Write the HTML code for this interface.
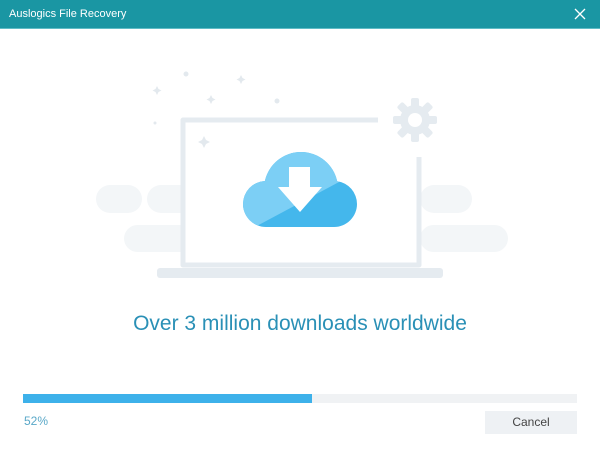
<!DOCTYPE html>
<html><head><style>
body{margin:0;width:600px;height:453px;background:#fff;position:relative;overflow:hidden;font-family:"Liberation Sans",sans-serif}
.t{position:absolute;left:0;top:0;width:600px;height:28px;background:#1a96a3;border-bottom:1px solid #5fbcc6}
.t span{position:absolute;left:9px;top:8px;color:#fff;font-size:11px}
.p{position:absolute;background:#f3f6f8;border-radius:14px}
</style></head><body>
<div class="t"><span>Auslogics File Recovery</span>
<svg style="position:absolute;left:574px;top:8px" width="12" height="12"><path d="M1 1L11 11M11 1L1 11" stroke="#fff" stroke-width="1.3"/></svg></div>
<div class="p" style="left:96px;top:185px;width:46px;height:28px"></div>
<div class="p" style="left:147px;top:185px;width:60px;height:28px"></div>
<div class="p" style="left:420px;top:185px;width:52px;height:28px"></div>
<div class="p" style="left:124px;top:225px;width:80px;height:27px"></div>
<div class="p" style="left:420px;top:225px;width:88px;height:27px"></div>
<svg style="position:absolute;left:0;top:0" width="600" height="300">
<rect x="183" y="120" width="238" height="145" fill="#fff"/>
<path d="M378 120H183V265H419V157" fill="none" stroke="#e5ebf0" stroke-width="5" stroke-linejoin="round"/>
<rect x="157" y="268" width="286" height="10" rx="3" fill="#e5ebf0"/>
<g fill="#e5ebf0" transform="translate(415 120)">
<circle r="15"/>
<g><rect x="-4" y="-22" width="8" height="44" rx="2"/><rect x="-4" y="-22" width="8" height="44" rx="2" transform="rotate(45)"/><rect x="-4" y="-22" width="8" height="44" rx="2" transform="rotate(90)"/><rect x="-4" y="-22" width="8" height="44" rx="2" transform="rotate(135)"/></g>
<circle r="7" fill="#fff"/></g>
<g fill="#e3e9ee">
<circle cx="186" cy="74" r="2.5"/><circle cx="277" cy="101" r="2.5"/><circle cx="155" cy="123" r="1.5"/>
<path d="M157 86l1.5 3 3 1.5-3 1.5-1.5 3-1.5-3-3-1.5 3-1.5z"/>
<path d="M211 95l1.5 3 3 1.5-3 1.5-1.5 3-1.5-3-3-1.5 3-1.5z"/>
<path d="M241 75l1.5 3 3 1.5-3 1.5-1.5 3-1.5-3-3-1.5 3-1.5z"/>
<path d="M204 136l2 4 4 2-4 2-2 4-2-4-4-2 4-2z"/></g>
<defs><clipPath id="c">
<circle cx="266" cy="204" r="23"/><circle cx="301" cy="189" r="37"/><circle cx="334" cy="204" r="23"/><rect x="266" y="190" width="68" height="37"/>
</clipPath></defs>
<g clip-path="url(#c)"><rect x="230" y="140" width="150" height="100" fill="#44b7ec"/><path d="M230 140H380V160L240 235H230z" fill="#7ccff5"/></g>
<path d="M289 167h21v20h12l-22 25-22-25h11z" fill="#fff"/>
</svg>
<div style="position:absolute;left:0;width:600px;top:312px;text-align:center;font-size:21px;color:#2a90b6">Over 3 million downloads worldwide</div>
<div style="position:absolute;left:23px;top:394px;width:554px;height:9px;background:#f0f2f4"></div>
<div style="position:absolute;left:23px;top:394px;width:289px;height:9px;background:#3db1ea"></div>
<div style="position:absolute;left:24px;top:414px;font-size:12px;color:#5aa8c8">52%</div>
<div style="position:absolute;left:485px;top:411px;width:92px;height:23px;background:#eef1f4;font-size:12px;color:#444;text-align:center;line-height:23px">Cancel</div>
</body></html>
